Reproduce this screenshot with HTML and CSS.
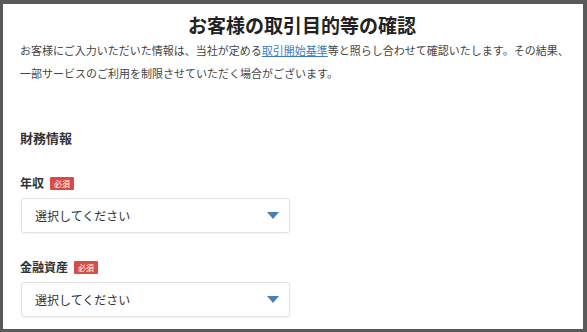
FILE: index.html
```html
<!DOCTYPE html>
<html lang="ja">
<head>
    <meta charset="UTF-8">
    <meta name="viewport" content="width=device-width, initial-scale=1.0">
    <title>お客様の取引目的等の確認</title>
    <link rel="stylesheet" href="styles.css">
</head>
<body>
    <div class="page">
        <h1 class="title">お客様の取引目的等の確認</h1>
        <p class="lead">お客様にご入力いただいた情報は、当社が定める<a href="#">取引開始基準</a>等と照らし合わせて確認いたします。その結果、一部サービスのご利用を制限させていただく場合がございます。</p>

        <h2 class="section">財務情報</h2>

        <div class="field">
            <div class="label">年収<span class="req">必須</span></div>
            <div class="select">
                <span>選択してください</span>
                <svg width="12" height="7" viewBox="0 0 12 7"><path d="M0 0h12L6 7z" fill="#4a80b4"/></svg>
            </div>
        </div>

        <div class="field">
            <div class="label">金融資産<span class="req">必須</span></div>
            <div class="select">
                <span>選択してください</span>
                <svg width="12" height="7" viewBox="0 0 12 7"><path d="M0 0h12L6 7z" fill="#4a80b4"/></svg>
            </div>
        </div>
    </div>
</body>
</html>
```

FILE: styles.css
```css
html, body {
    margin: 0;
    height: 100%;
    overflow: hidden;
}
body {
    background: #595959;
    padding: 4px 4px 0 3px;
    box-sizing: border-box;
    font-family: "Noto Sans CJK JP", "Noto Sans", sans-serif;
}
.page {
    background: #fff;
    height: 325px;
    padding: 7px 8px 0 17px;
    box-sizing: border-box;
}
.title {
    margin: 0;
    text-align: center;
    font-size: 19px;
    line-height: 28px;
    font-weight: bold;
    color: #222;
    padding-left: 9px;
}
.lead {
    margin: 0;
    font-size: 11px;
    line-height: 23px;
    color: #444;
}
.lead a {
    color: #3c7cc0;
    text-decoration: underline;
}
.section {
    margin: 43px 0 0;
    font-size: 13px;
    line-height: 20px;
    font-weight: bold;
    color: #333;
}
.field {
    margin-top: 25px;
}
.field + .field {
    margin-top: 24px;
}
.label {
    display: flex;
    align-items: center;
    font-size: 12px;
    line-height: 20px;
    font-weight: bold;
    color: #333;
}
.req {
    margin-left: 6px;
    background: #d64c47;
    color: #fff;
    font-size: 8px;
    line-height: 13px;
    padding: 0 4px;
    border-radius: 1px;
    font-weight: normal;
}
.select {
    margin-top: 5px;
    margin-left: 1px;
    width: 269px;
    height: 35px;
    box-sizing: border-box;
    border: 1px solid #e2e2e2;
    border-radius: 3px;
    box-shadow: 0 1px 2px rgba(0, 0, 0, 0.06);
    display: flex;
    align-items: center;
    justify-content: space-between;
    padding: 0 10px 0 13px;
    font-size: 12px;
    color: #333;
}
```
